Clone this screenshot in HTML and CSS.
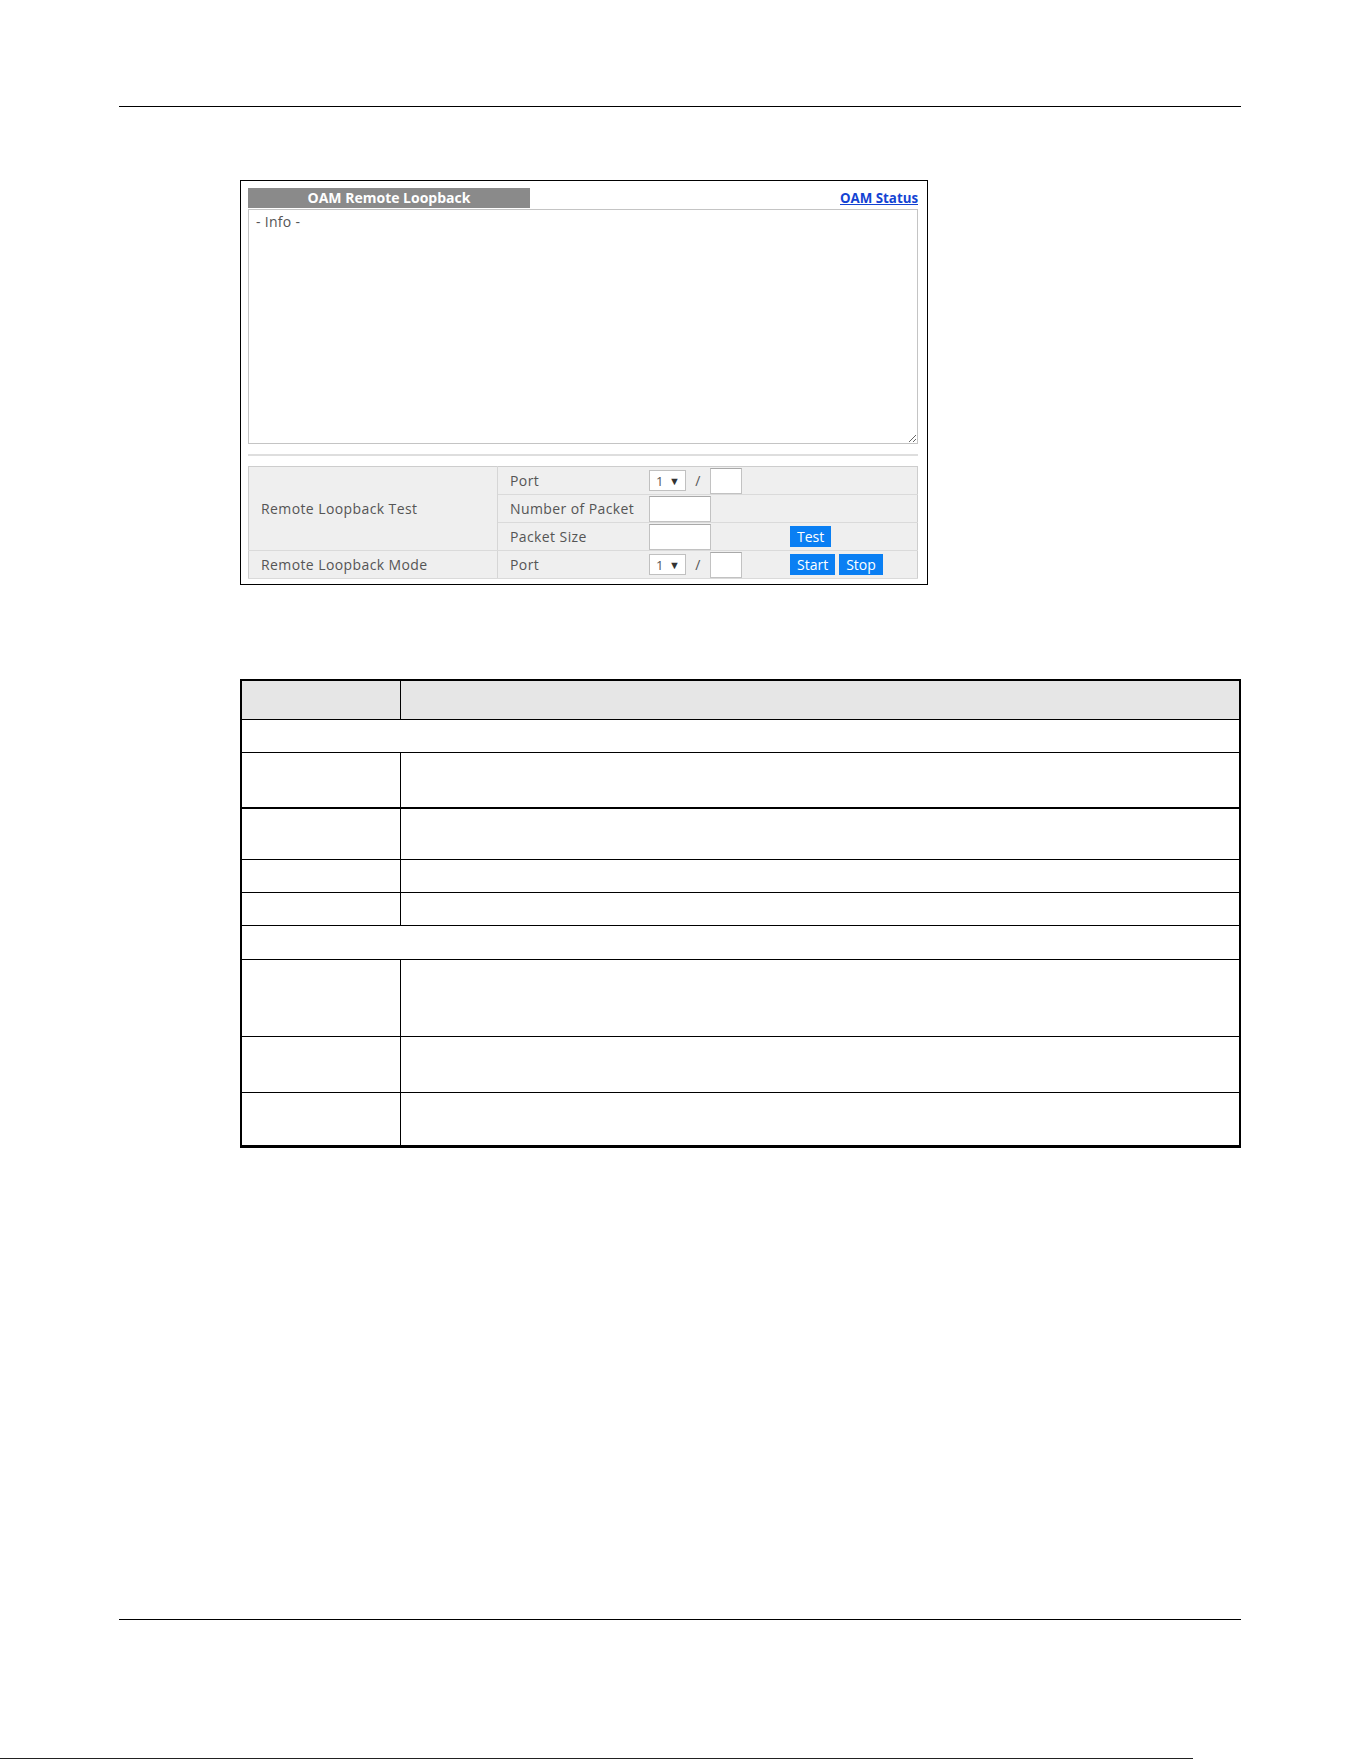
FILE: index.html
```html
<!DOCTYPE html>
<html lang="en">
<head>
<meta charset="utf-8">
<title>OAM Remote Loopback</title>
<link rel="stylesheet" href="styles.css">
</head>
<body>
<div class="page">
  <div class="rule rule-top"></div>

  <div class="screen">
    <div class="screen-head">
      <div class="tab">OAM Remote Loopback</div>
      <a class="link" href="#">OAM Status</a>
    </div>
    <textarea class="info" spellcheck="false">- Info -</textarea>
    <div class="sep"></div>
    <table class="lb">
      <tr>
        <td class="lb-name" rowspan="3">Remote Loopback Test</td>
        <td class="lb-field">Port</td>
        <td class="lb-ctl"><span class="sel"><span>1</span><span class="caret">&#9660;</span></span><span class="slash">/</span><span class="box box-sm"></span></td>
        <td class="lb-act"></td>
      </tr>
      <tr>
        <td class="lb-field">Number of Packet</td>
        <td class="lb-ctl"><span class="box box-md"></span></td>
        <td class="lb-act"></td>
      </tr>
      <tr>
        <td class="lb-field">Packet Size</td>
        <td class="lb-ctl"><span class="box box-md"></span></td>
        <td class="lb-act"><button class="btn">Test</button></td>
      </tr>
      <tr class="last">
        <td class="lb-name">Remote Loopback Mode</td>
        <td class="lb-field">Port</td>
        <td class="lb-ctl"><span class="sel"><span>1</span><span class="caret">&#9660;</span></span><span class="slash">/</span><span class="box box-sm"></span></td>
        <td class="lb-act"><button class="btn">Start</button><button class="btn">Stop</button></td>
      </tr>
    </table>
  </div>

  <div class="doc">
    <div class="doc-row head h38"><div class="term"></div><div class="desc"></div></div>
    <div class="doc-row section h32"></div>
    <div class="doc-row h54"><div class="term"></div><div class="desc"></div></div>
    <div class="doc-row thick h50"><div class="term"></div><div class="desc"></div></div>
    <div class="doc-row h32"><div class="term"></div><div class="desc"></div></div>
    <div class="doc-row h32"><div class="term"></div><div class="desc"></div></div>
    <div class="doc-row section h33"></div>
    <div class="doc-row h76"><div class="term"></div><div class="desc"></div></div>
    <div class="doc-row h55"><div class="term"></div><div class="desc"></div></div>
    <div class="doc-row h52"><div class="term"></div><div class="desc"></div></div>
  </div>

  <div class="rule rule-bottom"></div>
  <div class="edge"></div>
</div>
</body>
</html>
```

FILE: styles.css
```css
html, body {
  margin: 0;
  padding: 0;
  background: #fff;
}

.page {
  width: 1361px;
  height: 1761px;
  overflow: hidden;
  font-family: "Open Sans", "Liberation Sans", sans-serif;
}

/* page header / footer rules */
.rule {
  height: 0;
  border-top: 1px solid #000;
  width: 1122px;
  margin-left: 119px;
}
.rule-top { margin-top: 106px; }
.rule-bottom { margin-top: 471px; }

.edge {
  margin-top: 138px;
  width: 1193px;
  height: 1px;
  background: #222;
}

/* screen capture of the web configurator */
.screen {
  margin: 73px 0 0 240px;
  width: 688px;
  box-sizing: border-box;
  border: 1px solid #000;
  padding: 7px 9px 5px 7px;
}

.screen-head {
  display: flex;
  justify-content: space-between;
  align-items: center;
  height: 20px;
  margin-bottom: 1px;
}

.tab {
  width: 282px;
  height: 20px;
  background: #8a8a8a;
  color: #fff;
  font-weight: 700;
  font-size: 14px;
  line-height: 20px;
  text-align: center;
}

.link {
  color: #1343d3;
  font-weight: 700;
  font-size: 13.3px;
  text-decoration: underline;
  line-height: 20px;
}

.info {
  display: block;
  width: 670px;
  height: 235px;
  box-sizing: border-box;
  margin: 0;
  border: 1px solid #c4c4c4;
  padding: 2px 7px;
  font-family: "Open Sans", "Liberation Sans", sans-serif;
  font-size: 14px;
  letter-spacing: 0.3px;
  color: #555;
  background: #fff;
  outline: none;
}

.sep {
  margin: 10px 0;
  height: 2px;
  background: #dedede;
}

/* loopback settings table */
.lb {
  width: 670px;
  border-collapse: collapse;
  background: #efefef;
  border: 1px solid #cdcdcd;
  font-size: 14px;
  letter-spacing: 0.4px;
  color: #555;
}
.lb td {
  height: 27px;
  padding: 0;
  border-bottom: 1px solid #dadada;
  vertical-align: middle;
  white-space: nowrap;
}
.lb-name {
  width: 236px;
  padding-left: 12px !important;
  border-right: 1px solid #d6d6d6;
}
.lb-field {
  width: 138px;
  padding-left: 12px !important;
}
.lb-ctl {
  width: 140px;
  padding-left: 1px !important;
}
.lb-act {
  padding-left: 1px !important;
}

.lb-ctl, .lb-act {
  font-size: 0;
}

.sel {
  display: inline-flex;
  align-items: center;
  justify-content: space-between;
  vertical-align: middle;
  width: 37px;
  height: 21px;
  box-sizing: border-box;
  border: 1px solid #c0c0c0;
  background: #fff;
  padding: 0 5px 0 6px;
  font-size: 13px;
  color: #555;
  letter-spacing: 0;
}
.caret {
  font-size: 11px;
  color: #333;
}

.slash {
  display: inline-block;
  vertical-align: middle;
  width: 24px;
  text-align: center;
  font-size: 14px;
  color: #555;
}

.box {
  display: inline-block;
  vertical-align: middle;
  height: 26px;
  box-sizing: border-box;
  background: #fff;
  border: 1px solid #c2c2c2;
  border-top-color: #a9a9a9;
}
.box-sm { width: 32px; }
.box-md { width: 62px; }

.btn {
  display: inline-block;
  vertical-align: middle;
  height: 21px;
  margin: 0 4px 0 0;
  padding: 0 7px;
  border: 0;
  border-radius: 0;
  background: #0a7ff3;
  color: #fff;
  font-family: "Open Sans", "Liberation Sans", sans-serif;
  font-size: 14px;
  line-height: 21px;
}

/* field description table */
.doc {
  margin: 94px 0 0 240px;
  width: 1001px;
  box-sizing: border-box;
  border: 2px solid #000;
  border-bottom-width: 3px;
}
.doc-row {
  display: flex;
  border-top: 1px solid #000;
}
.doc-row.head {
  border-top: 0;
  background: #e6e6e6;
}
.doc-row.thick {
  border-top-width: 2px;
}
.doc-row .term {
  width: 158px;
  border-right: 1px solid #000;
}
.doc-row .desc {
  flex: 1;
}

.h32 { height: 32px; }
.h33 { height: 33px; }
.h38 { height: 38px; }
.h50 { height: 50px; }
.h52 { height: 52px; }
.h54 { height: 54px; }
.h55 { height: 55px; }
.h76 { height: 76px; }
```
